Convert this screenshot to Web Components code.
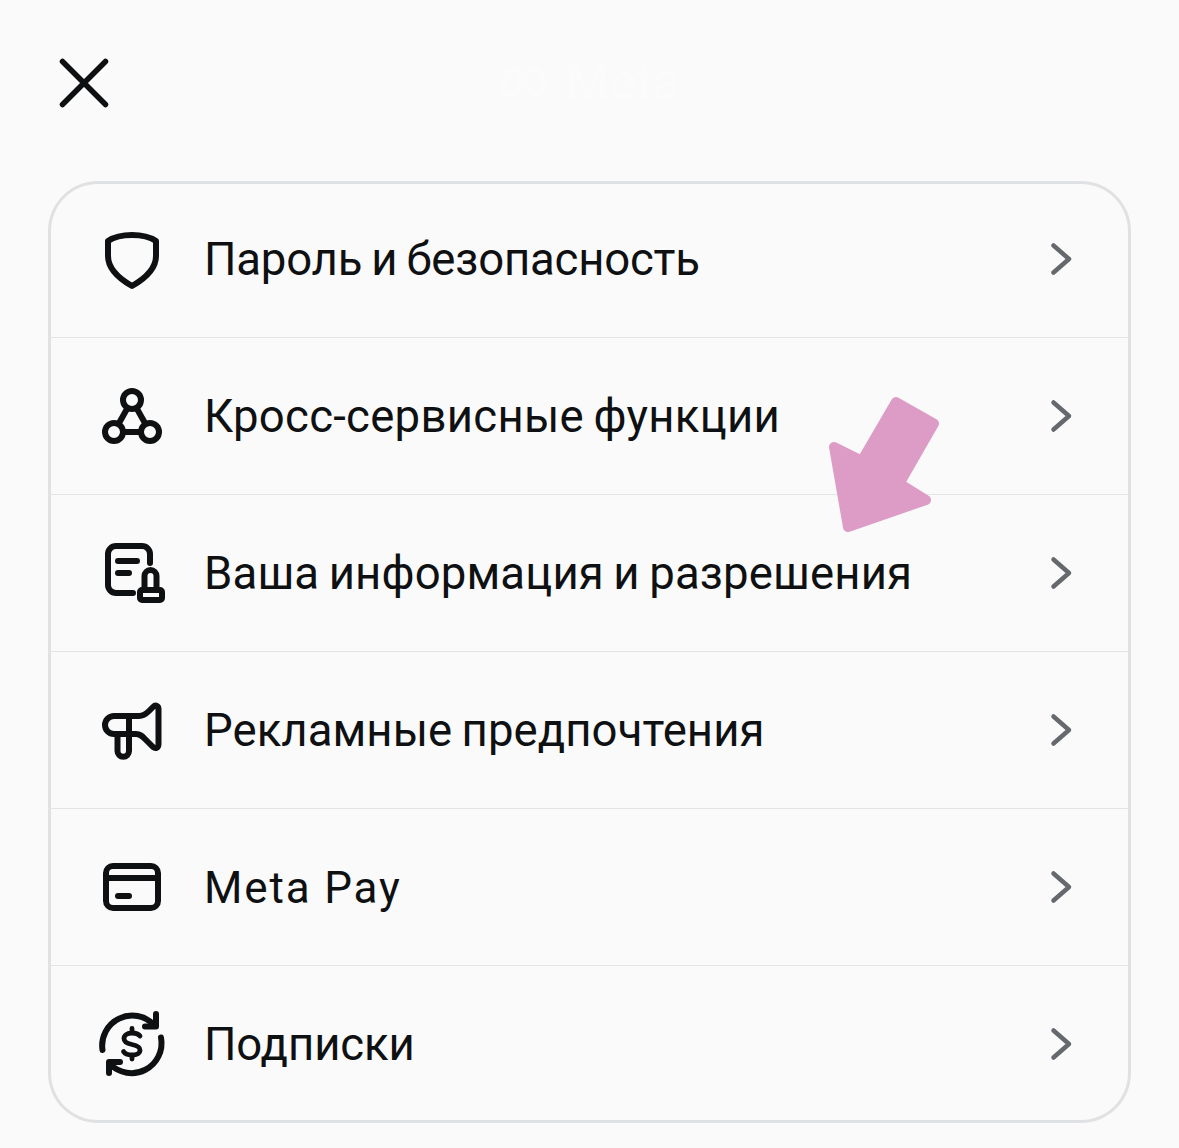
<!DOCTYPE html>
<html lang="ru">
<head>
<meta charset="utf-8">
<title>Настройки</title>
<style>
  html, body { margin: 0; background: #fafafa; }
</style>
</head>
<body>
<settings-screen>
  <menu-row icon="shield" style="--track: -0.2px">Пароль и безопасность</menu-row>
  <menu-row icon="nodes" style="--track: 0.28px">Кросс-сервисные функции</menu-row>
  <menu-row icon="stamp" style="--track: 0.15px">Ваша информация и разрешения</menu-row>
  <menu-row icon="megaphone" style="--track: 0.07px">Рекламные предпочтения</menu-row>
  <menu-row icon="card" wide>Meta Pay</menu-row>
  <menu-row icon="renew" style="--track: -0.1px">Подписки</menu-row>
</settings-screen>

<script>
const ICONS = {
  shield: `<path d="M12 18C18 14 27 12 36 12C45 12 54 14 60 18V33C60 46 50 55 36 63C22 55 12 46 12 33Z"/>`,
  nodes: `<circle cx="36" cy="20" r="9"/><circle cx="18" cy="52" r="9"/><circle cx="54" cy="52" r="9"/>
          <path d="M31.5 28L22.5 44M40.5 28L49.5 44M27 52H45"/>`,
  stamp: `<path d="M54 26V17A8 8 0 0 0 46 9H20A8 8 0 0 0 12 17V48A8 8 0 0 0 20 56H37"/>
          <path d="M22 24H41M22 36H33"/>
          <path d="M48.5 52V39A6 6 0 0 1 60.5 39V52"/>
          <rect x="44" y="53" width="22" height="10" rx="2"/>`,
  megaphone: `<path d="M33 22H43C47 22 50 20 53 17L57 13C59.5 10.5 62.5 11.5 62.5 15V50C62.5 54 59.5 55 57 53L49 45C46 42 44 40 40 40H18A9 9 0 0 1 18 22H33V57A5.75 5.75 0 0 1 21.5 57V40"/>`,
  card: `<rect x="10" y="15" width="52" height="42" rx="7"/><path d="M10 27H62"/><path d="M22 45H33" stroke-width="6"/>`,
  renew: `<path d="M6.5 42A30 30 0 0 1 58 17"/><path d="M60 6V18.5H49"/>
          <path d="M65 29.5A30 30 0 0 1 14 56"/><path d="M13 65V54H24"/>
          <path d="M44 28C42.5 26 40 25 36 25C31 25 28 27.5 28 30.5C28 34 31 35.5 36 36.5C41 37.5 44 39 44 42C44 45 41 47 36 47C32 47 29 46 27.5 43.5M36 20.5V25M36 47V51" stroke-width="4.8"/>`
};

// One line of the settings list: icon, label, chevron
class MenuRow extends HTMLElement {
  constructor() {
    super();
    this.attachShadow({ mode: 'open' });
    const icon = ICONS[this.getAttribute('icon')] ?? '';
    this.shadowRoot.innerHTML = `
      <style>
        :host {
          display: flex; align-items: center; box-sizing: border-box;
          height: 157px; padding: 0 58px 0 48px;
          border-bottom: 1px solid #e3e4e5;
          font: 400 45.5px/1 Roboto, "Liberation Sans", sans-serif; letter-spacing: var(--track, 0); word-spacing: -2px; color: #0f1012;
        }
        :host(:last-child) { border-bottom-color: transparent; }
        :host([wide]) { font-size: 44px; font-weight: 450; letter-spacing: 1.85px; word-spacing: 0; }
        .icon { flex: none; width: 72px; height: 72px; fill: none; stroke: #0f1012; stroke-width: 6; stroke-linecap: round; stroke-linejoin: round; }
        .label { flex: 1; margin-left: 36px; white-space: nowrap; padding-top: 2px; }
        .chevron { flex: none; width: 24px; height: 36px; fill: none; stroke: #65686c; stroke-width: 4.5; stroke-linecap: round; stroke-linejoin: round; }
      </style>
      <svg class="icon" viewBox="0 0 72 72">${icon}</svg>
      <span class="label"><slot></slot></span>
      <svg class="chevron" viewBox="0 0 24 36"><path d="M4.5 4.5L20 18L4.5 31.5"/></svg>
    `;
  }
}

class MenuCard extends HTMLElement {
  constructor() {
    super();
    this.attachShadow({ mode: 'open' });
    this.shadowRoot.innerHTML = `
      <style>
        :host { display: block; border-radius: 50px; box-shadow: inset 0 0 0 3px #e0e1e3; overflow: hidden; }
      </style>
      <slot></slot>
    `;
  }
}

// Top bar: close button, washed-out wordmark in the middle
class TopBar extends HTMLElement {
  constructor() {
    super();
    this.attachShadow({ mode: 'open' });
    this.shadowRoot.innerHTML = `
      <style>
        :host { display: grid; grid-template-columns: 1fr auto 1fr; align-items: center; height: 181px; padding-bottom: 17px; box-sizing: border-box; }
        .close { width: 72px; height: 72px; fill: none; stroke: #0f1012; stroke-width: 5.5; stroke-linecap: round; }
        .brand { display: flex; align-items: center; gap: 18px; color: #fbfbfb; font: 400 50px/1 Roboto, sans-serif; }
        .brand svg { width: 48px; height: 36px; fill: none; stroke: #fbfbfb; stroke-width: 6; stroke-linecap: round; }
      </style>
      <svg class="close" viewBox="0 0 72 72"><path d="M14.5 15.5L57.5 58.5M57.5 15.5L14.5 58.5"/></svg>
      <div class="brand">
        <svg viewBox="0 0 48 36"><path d="M4 28C4 14 9 5 14 5C21 5 26 30 36 30C42 30 44 25 44 20C44 11 39 5 34 5C25 5 20 30 11 30C7 30 4 29 4 28"/></svg>
        <span>Meta</span>
      </div>
      <span></span>
    `;
  }
}

// Page frame, plus the pink pointer laid over the list
class SettingsScreen extends HTMLElement {
  constructor() {
    super();
    this.attachShadow({ mode: 'open' });
    this.shadowRoot.innerHTML = `
      <style>
        :host { display: block; position: relative; height: 1148px; padding: 0 48px; box-sizing: border-box; background: #fafafa; overflow: hidden; }
        .pointer { position: absolute; left: 0; top: 0; width: 1179px; height: 1148px; pointer-events: none; }
        .pointer polygon { fill: #dc9cc6; stroke: #dc9cc6; stroke-width: 10; stroke-linejoin: round; }
      </style>
      <top-bar></top-bar>
      <menu-card><slot></slot></menu-card>
      <svg class="pointer" viewBox="0 0 1179 1148">
        <polygon points="896,402 934,423.5 899.5,483.5 926,500 848,527 834,447 861.75,460.75"/>
      </svg>
    `;
  }
}

customElements.define('menu-row', MenuRow);
customElements.define('menu-card', MenuCard);
customElements.define('top-bar', TopBar);
customElements.define('settings-screen', SettingsScreen);
</script>
</body>
</html>
